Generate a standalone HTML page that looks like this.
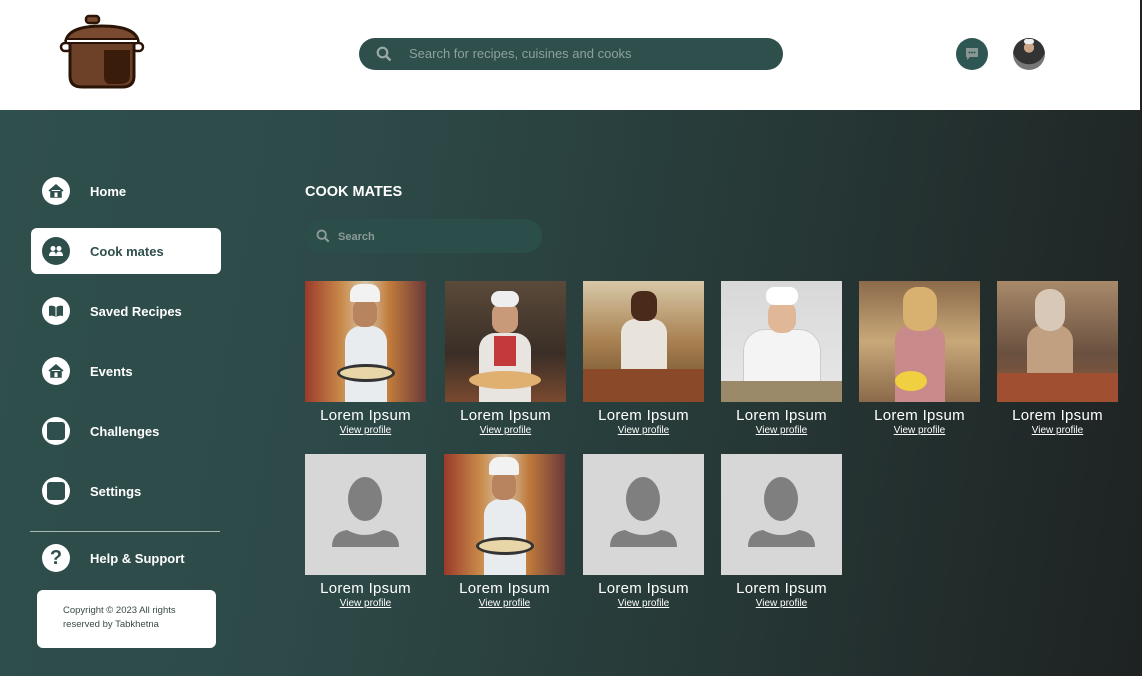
<!DOCTYPE html>
<html><head><meta charset="utf-8"><style>
*{margin:0;padding:0;box-sizing:border-box}
body{width:1142px;height:676px;overflow:hidden;font-family:"Liberation Sans",sans-serif;background:#1f2323;position:relative}
.hdr{position:absolute;left:0;top:0;width:1140px;height:110px;background:#fff}
.main{position:absolute;left:0;top:110px;width:1140px;height:566px;background:linear-gradient(100deg,#2f4f4c 0%,#2d4a48 30%,#263836 65%,#1e2222 100%)}
.sb{position:absolute;left:0;top:0;width:1142px;height:676px}
.nav{position:absolute;left:42px;width:200px;height:28px;display:flex;align-items:center;color:#fff;font-weight:bold;font-size:13px}
.nav .ic{width:28px;height:28px;border-radius:50%;background:#fff;margin-right:20px;display:flex;align-items:center;justify-content:center}
.card{position:absolute;width:121px;text-align:center;color:#fff}
.card .ph{width:121px;height:121px;position:relative;overflow:hidden}
.card .nm{font-size:15px;margin-top:5px;line-height:17px;letter-spacing:.3px}
.card .vp{font-size:10px;text-decoration:underline;line-height:13px}
</style></head><body>
<div class="hdr">
<svg style="position:absolute;left:58px;top:14px" width="88" height="76" viewBox="0 0 88 76">
<rect x="28" y="2" width="13" height="7" rx="3" fill="#7a4a30" stroke="#2a1408" stroke-width="2.5"/>
<path d="M8 26 Q12 12 44 12 Q76 12 80 26 Z" fill="#7a4a30" stroke="#2a1408" stroke-width="3"/>
<rect x="3" y="29" width="10" height="8" rx="4" fill="#fff" stroke="#2a1408" stroke-width="2.5"/>
<rect x="75" y="29" width="10" height="8" rx="4" fill="#fff" stroke="#2a1408" stroke-width="2.5"/>
<path d="M12 28 H76 V62 Q76 73 64 73 H24 Q12 73 12 62 Z" fill="#6d4128" stroke="#2a1408" stroke-width="3"/>
<path d="M46 36 H72 V62 Q72 70 62 70 H52 Q46 70 46 62 Z" fill="#3a1c0a"/>
<rect x="8" y="25" width="72" height="4" fill="#fff" stroke="#2a1408" stroke-width="2"/>
</svg>
<div style="position:absolute;left:359px;top:38px;width:424px;height:32px;border-radius:16px;background:#2e4f4c;color:#8ea19f;font-size:13px;line-height:32px;padding-left:50px">Search for recipes, cuisines and cooks</div>
<svg style="position:absolute;left:376px;top:46px" width="16" height="16" viewBox="0 0 16 16"><circle cx="6.5" cy="6.5" r="4.8" fill="none" stroke="#9aa9a7" stroke-width="2.2"/><path d="M10 10 L14.5 14.5" stroke="#9aa9a7" stroke-width="2.5"/></svg>
<div style="position:absolute;left:956px;top:38px;width:32px;height:32px;border-radius:50%;background:#2e5652"></div>
<svg style="position:absolute;left:964px;top:46px" width="16" height="16" viewBox="0 0 16 16"><path d="M2 2 H14 V11 H6 L3 14 V11 H2 Z" fill="#8a9795"/><circle cx="5.5" cy="6.5" r="1" fill="#2e5652"/><circle cx="8" cy="6.5" r="1" fill="#2e5652"/><circle cx="10.5" cy="6.5" r="1" fill="#2e5652"/></svg>
<div style="position:absolute;left:1013px;top:38px;width:32px;height:32px;border-radius:50%;background:radial-gradient(circle at 50% 30%,#c9a58a 0 18%,#333 19% 60%,#777 61%);overflow:hidden"><div style="position:absolute;left:11px;top:1px;width:10px;height:5px;background:#eee;border-radius:3px"></div></div>
</div>
<div class="main"></div>
<div class="sb">
<div class="nav" style="top:177px"><div class="ic"><svg width="16" height="16" viewBox="0 0 16 16"><path d="M1 8 L8 2 L15 8 M3 7 V14 H13 V7" fill="#2e4f4c" stroke="#2e4f4c" stroke-width="1.5"/><rect x="6.5" y="9.5" width="3" height="4.5" fill="#fff"/></svg></div>Home</div>
<div style="position:absolute;left:31px;top:228px;width:190px;height:46px;background:#fff;border-radius:6px"></div>
<div class="nav" style="top:237px;color:#2e4f4c"><div class="ic" style="background:#2e4f4c"><svg width="16" height="16" viewBox="0 0 16 16"><circle cx="5" cy="5.5" r="2.5" fill="#fff"/><circle cx="11" cy="5.5" r="2.5" fill="#fff"/><path d="M1 13 Q1 8.5 5 8.5 Q8 8.5 8 13 Z M8 13 Q8 8.5 11 8.5 Q15 8.5 15 13 Z" fill="#fff"/></svg></div>Cook mates</div>
<div class="nav" style="top:297px"><div class="ic"><svg width="16" height="16" viewBox="0 0 16 16"><path d="M1 3 Q5 2 7.5 4 V14 Q5 12 1 13 Z M8.5 4 Q11 2 15 3 V13 Q11 12 8.5 14 Z" fill="#2e4f4c"/></svg></div>Saved Recipes</div>
<div class="nav" style="top:357px"><div class="ic"><svg width="16" height="16" viewBox="0 0 16 16"><path d="M1 8 L8 2 L15 8 M3 7 V14 H13 V7" fill="#2e4f4c" stroke="#2e4f4c" stroke-width="1.5"/><rect x="6.5" y="9.5" width="3" height="4.5" fill="#fff"/></svg></div>Events</div>
<div class="nav" style="top:417px"><div class="ic"><div style="width:18px;height:18px;background:#2e4f4c;border-radius:3px"></div></div>Challenges</div>
<div class="nav" style="top:477px"><div class="ic"><div style="width:18px;height:18px;background:#2e4f4c;border-radius:3px"></div></div>Settings</div>
<div style="position:absolute;left:30px;top:531px;width:190px;height:1px;background:#aab8b6"></div>
<div class="nav" style="top:544px"><div class="ic" style="color:#2e4f4c;font-size:20px;font-weight:900">?</div>Help &amp; Support</div>
<div style="position:absolute;left:37px;top:590px;width:179px;height:58px;background:#fff;border-radius:6px;color:#3a4a48;font-size:9.5px;line-height:14px;padding:14px 0 0 26px">Copyright © 2023 All rights<br>reserved by Tabkhetna</div>
<div style="position:absolute;left:305px;top:184px;color:#fff;font-weight:bold;font-size:14.5px">COOK MATES</div>
<div style="position:absolute;left:305px;top:219px;width:237px;height:34px;border-radius:17px;background:#2c4e4b;color:#8a9a98;font-weight:bold;font-size:11px;line-height:36px;padding-left:33px">Search</div>
<svg style="position:absolute;left:316px;top:229px" width="14" height="14" viewBox="0 0 16 16"><circle cx="6.5" cy="6.5" r="4.8" fill="none" stroke="#8a9a98" stroke-width="2.2"/><path d="M10 10 L14.5 14.5" stroke="#8a9a98" stroke-width="2.5"/></svg>

<div class="card" style="left:305px;top:281px"><div class="ph" style="background:linear-gradient(90deg,#9a3a2a,#c98a4a 30%,#d8c4a8 50%,#c07a3a 70%,#6a3a3a)"><div style="position:absolute;left:40px;top:45px;width:42px;height:76px;background:#e8ecef;border-radius:16px 16px 0 0"></div><div style="position:absolute;left:48px;top:18px;width:24px;height:28px;background:#b8835f;border-radius:10px"></div><div style="position:absolute;left:45px;top:3px;width:30px;height:18px;background:#f2f2f2;border-radius:10px 10px 2px 2px"></div><div style="position:absolute;left:32px;top:83px;width:58px;height:18px;background:#e8d6a8;border-radius:50%;border:3px solid #333"></div></div><div class="nm">Lorem Ipsum</div><div class="vp">View profile</div></div>
<div class="card" style="left:445px;top:281px"><div class="ph" style="background:linear-gradient(180deg,#5a4a3a,#3a2e26 60%,#7a4a30)"><div style="position:absolute;left:34px;top:52px;width:52px;height:70px;background:#e8e4e0;border-radius:16px 16px 0 0"></div><div style="position:absolute;left:49px;top:55px;width:22px;height:30px;background:#c43a3a"></div><div style="position:absolute;left:47px;top:22px;width:26px;height:30px;background:#c99a7a;border-radius:10px"></div><div style="position:absolute;left:46px;top:10px;width:28px;height:16px;background:#eee;border-radius:10px"></div><div style="position:absolute;left:24px;top:90px;width:72px;height:18px;background:#e0b070;border-radius:50%"></div></div><div class="nm">Lorem Ipsum</div><div class="vp">View profile</div></div>
<div class="card" style="left:583px;top:281px"><div class="ph" style="background:linear-gradient(180deg,#d8c8a8,#a88050 50%,#6a4a2a)"><div style="position:absolute;left:38px;top:38px;width:46px;height:60px;background:#e8e4dc;border-radius:14px 14px 0 0"></div><div style="position:absolute;left:48px;top:10px;width:26px;height:30px;background:#4a2a1a;border-radius:10px"></div><div style="position:absolute;left:0;top:88px;width:121px;height:33px;background:#8a4a2a"></div></div><div class="nm">Lorem Ipsum</div><div class="vp">View profile</div></div>
<div class="card" style="left:721px;top:281px"><div class="ph" style="background:linear-gradient(180deg,#d8d8d8,#e8e8e8)"><div style="position:absolute;left:22px;top:48px;width:78px;height:73px;background:#f4f4f4;border-radius:22px 22px 0 0;border:1px solid #ccc"></div><div style="position:absolute;left:47px;top:20px;width:28px;height:32px;background:#e0b898;border-radius:12px"></div><div style="position:absolute;left:45px;top:6px;width:32px;height:18px;background:#fff;border-radius:8px"></div><div style="position:absolute;left:0;top:100px;width:121px;height:21px;background:#9a8a6a"></div></div><div class="nm">Lorem Ipsum</div><div class="vp">View profile</div></div>
<div class="card" style="left:859px;top:281px"><div class="ph" style="background:linear-gradient(180deg,#8a6a4a,#c8a878 50%,#8a6a4a)"><div style="position:absolute;left:36px;top:44px;width:50px;height:77px;background:#c88a8a;border-radius:16px 16px 0 0"></div><div style="position:absolute;left:44px;top:6px;width:34px;height:44px;background:#d8b070;border-radius:14px"></div><div style="position:absolute;left:36px;top:90px;width:32px;height:20px;background:#f0d040;border-radius:50%"></div></div><div class="nm">Lorem Ipsum</div><div class="vp">View profile</div></div>
<div class="card" style="left:997px;top:281px"><div class="ph" style="background:linear-gradient(180deg,#a88a6a,#6a5040 60%,#8a5a3a)"><div style="position:absolute;left:30px;top:44px;width:46px;height:60px;background:#c0a080;border-radius:16px 16px 0 0"></div><div style="position:absolute;left:38px;top:8px;width:30px;height:42px;background:#d8c8b8;border-radius:14px"></div><div style="position:absolute;left:0;top:92px;width:121px;height:29px;background:#a05030"></div></div><div class="nm">Lorem Ipsum</div><div class="vp">View profile</div></div>

<div class="card" style="left:305px;top:454px"><div class="ph" style="background:#d7d7d7"><svg width="121" height="121" viewBox="0 0 121 121"><ellipse cx="60" cy="45" rx="17" ry="22" fill="#7f7f7f"/><path d="M27 93 Q27 78 42 76 Q60 86 78 76 Q94 78 94 93 Z" fill="#7f7f7f"/></svg></div><div class="nm">Lorem Ipsum</div><div class="vp">View profile</div></div>
<div class="card" style="left:444px;top:454px"><div class="ph" style="background:linear-gradient(90deg,#9a3a2a,#c98a4a 30%,#d8c4a8 50%,#c07a3a 70%,#6a3a3a)"><div style="position:absolute;left:40px;top:45px;width:42px;height:76px;background:#e8ecef;border-radius:16px 16px 0 0"></div><div style="position:absolute;left:48px;top:18px;width:24px;height:28px;background:#b8835f;border-radius:10px"></div><div style="position:absolute;left:45px;top:3px;width:30px;height:18px;background:#f2f2f2;border-radius:10px 10px 2px 2px"></div><div style="position:absolute;left:32px;top:83px;width:58px;height:18px;background:#e8d6a8;border-radius:50%;border:3px solid #333"></div></div><div class="nm">Lorem Ipsum</div><div class="vp">View profile</div></div>
<div class="card" style="left:583px;top:454px"><div class="ph" style="background:#d7d7d7"><svg width="121" height="121" viewBox="0 0 121 121"><ellipse cx="60" cy="45" rx="17" ry="22" fill="#7f7f7f"/><path d="M27 93 Q27 78 42 76 Q60 86 78 76 Q94 78 94 93 Z" fill="#7f7f7f"/></svg></div><div class="nm">Lorem Ipsum</div><div class="vp">View profile</div></div>
<div class="card" style="left:721px;top:454px"><div class="ph" style="background:#d7d7d7"><svg width="121" height="121" viewBox="0 0 121 121"><ellipse cx="60" cy="45" rx="17" ry="22" fill="#7f7f7f"/><path d="M27 93 Q27 78 42 76 Q60 86 78 76 Q94 78 94 93 Z" fill="#7f7f7f"/></svg></div><div class="nm">Lorem Ipsum</div><div class="vp">View profile</div></div>
</div>
</body></html>
